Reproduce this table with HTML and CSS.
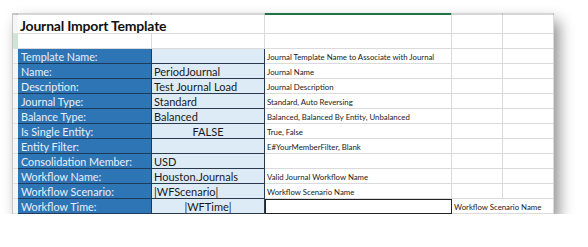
FILE: index.html
```html
<!DOCTYPE html>
<html lang="en">
  <head>
    <meta charset="UTF-8" />
    <title>Journal Import Template</title>
    <link rel="stylesheet" href="styles.css">
  </head>
  <body>
    <div class="sheet">
      <!-- column header edge -->
      <div class="hdr corner"></div>
      <div class="hdr"></div>
      <div class="hdr"></div>
      <div class="hdr active"></div>
      <div class="hdr"></div>
      <div class="hdr"></div>

      <!-- row 1 -->
      <div class="rh"></div>
      <div class="cell title span2">Journal Import Template</div>
      <div class="cell"></div>
      <div class="cell"></div>
      <div class="cell"></div>

      <!-- row 2 -->
      <div class="rh sel"></div>
      <div class="cell"></div>
      <div class="cell"></div>
      <div class="cell"></div>
      <div class="cell"></div>
      <div class="cell"></div>

      <div class="rh"></div>
      <div class="cell label">Template Name:</div>
      <div class="cell value"></div>
      <div class="cell note">Journal Template Name to Associate with Journal</div>
      <div class="cell"></div>
      <div class="cell"></div>

      <div class="rh"></div>
      <div class="cell label">Name:</div>
      <div class="cell value">PeriodJournal</div>
      <div class="cell note">Journal Name</div>
      <div class="cell"></div>
      <div class="cell"></div>

      <div class="rh"></div>
      <div class="cell label">Description:</div>
      <div class="cell value">Test Journal Load</div>
      <div class="cell note">Journal Description</div>
      <div class="cell"></div>
      <div class="cell"></div>

      <div class="rh"></div>
      <div class="cell label">Journal Type:</div>
      <div class="cell value">Standard</div>
      <div class="cell note">Standard, Auto Reversing</div>
      <div class="cell"></div>
      <div class="cell"></div>

      <div class="rh"></div>
      <div class="cell label">Balance Type:</div>
      <div class="cell value">Balanced</div>
      <div class="cell note">Balanced, Balanced By Entity, Unbalanced</div>
      <div class="cell"></div>
      <div class="cell"></div>

      <div class="rh"></div>
      <div class="cell label">Is Single Entity:</div>
      <div class="cell value center">FALSE</div>
      <div class="cell note">True, False</div>
      <div class="cell"></div>
      <div class="cell"></div>

      <div class="rh"></div>
      <div class="cell label">Entity Filter:</div>
      <div class="cell value"></div>
      <div class="cell note">E#YourMemberFilter, Blank</div>
      <div class="cell"></div>
      <div class="cell"></div>

      <div class="rh"></div>
      <div class="cell label">Consolidation Member:</div>
      <div class="cell value">USD</div>
      <div class="cell note"></div>
      <div class="cell"></div>
      <div class="cell"></div>

      <div class="rh"></div>
      <div class="cell label">Workflow Name:</div>
      <div class="cell value">Houston.Journals</div>
      <div class="cell note">Valid Journal Workflow Name</div>
      <div class="cell"></div>
      <div class="cell"></div>

      <div class="rh"></div>
      <div class="cell label">Workflow Scenario:</div>
      <div class="cell value">|WFScenario|</div>
      <div class="cell note">Workflow Scenario Name</div>
      <div class="cell"></div>
      <div class="cell"></div>

      <div class="rh"></div>
      <div class="cell label">Workflow Time:</div>
      <div class="cell value center">|WFTime|</div>
      <div class="cell note boxed"></div>
      <div class="cell note span2">Workflow Scenario Name</div>
    </div>
  </body>
</html>
```

FILE: styles.css
```css
* {
  margin: 0;
  padding: 0;
  box-sizing: border-box;
}

body {
  background-color: #fff;
  font-family: Lato, "Liberation Sans", sans-serif;
  padding: 13px 0 0 12px;
}

.sheet {
  display: grid;
  grid-template-columns: 5px 134px 113px 187px 51px 51px;
  grid-template-rows: 2px 19px repeat(12, 15px);
  width: 541px;
  background-color: #fff;
  border-left: 1px solid #c6c6c6;
  box-shadow: 6px 8px 14px rgba(0, 0, 0, 0.45);
}

.hdr {
  background-color: #d6d6d6;
  border-right: 1px solid #bcbcbc;
}

.hdr.corner {
  background-color: #c6c6c6;
}

.hdr.active {
  background-color: #217346;
}

.rh {
  background-color: #f6f6f6;
  border-bottom: 1px solid #e1e1e1;
}

.rh.sel {
  background-color: #cfe4d6;
}

.cell {
  border-right: 1px solid #dadada;
  border-bottom: 1px solid #dadada;
  display: flex;
  align-items: center;
  white-space: nowrap;
  overflow: hidden;
  padding: 0 2px;
}

.span2 {
  grid-column: span 2;
}

.title {
  font-size: 14px;
  font-weight: bold;
  letter-spacing: -0.2px;
  color: #111;
  padding-top: 2px;
}

.label {
  background-color: #2e75b6;
  color: #e8f0f9;
  font-size: 10.8px;
  border-right: 1px solid #1f3b5c;
  border-bottom: 1px solid #1f3b5c;
  padding-left: 3px;
}

.value {
  background-color: #ddebf7;
  color: #1a1a1a;
  font-size: 11px;
  border-right: 1px solid #2a3a4c;
  border-bottom: 1px solid #2a3a4c;
}

.value.center {
  justify-content: center;
}

.note {
  font-size: 7.8px;
  color: #222;
  padding-top: 1px;
}

.boxed {
  border: 1.5px solid #222;
}
```
